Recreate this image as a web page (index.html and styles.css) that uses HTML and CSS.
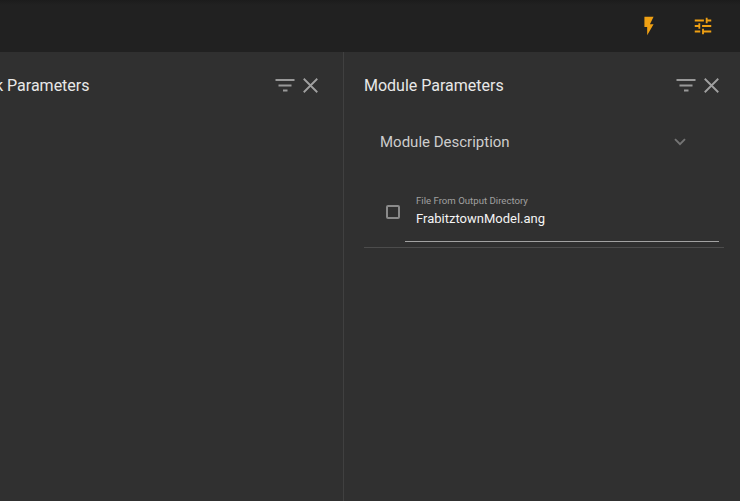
FILE: index.html
```html
<!DOCTYPE html>
<html lang="en">
<head>
<meta charset="utf-8">
<title>Module Parameters</title>
<link rel="stylesheet" href="styles.css">
</head>
<body>
<header class="toolbar">
  <svg class="tool" viewBox="0 0 24 24"><path d="M7 2v11h3v9l7-12h-4l4-8z"/></svg>
  <svg class="tool" viewBox="0 0 24 24"><path d="M3 17v2h6v-2H3zM3 5v2h10V5H3zm10 16v-2h8v-2h-8v-2h-2v6h2zM7 9v2H3v2h4v2h2V9H7zm14 4v-2H11v2h10zm-6-4h2V7h4V5h-4V3h-2v6z"/></svg>
</header>
<main class="panels">
  <section class="panel panel-left">
    <div class="panel-head">
      <h2 class="clipped">k Parameters</h2>
      <svg class="filter" viewBox="0 0 20 14"><path d="M.5 1h19v2H.5zM3.500 6.500h13v2h-13zM8 11.500h4.500v2H8z"/></svg>
      <svg class="close" viewBox="0 0 14 14"><path d="M.7.7l12.600 12.600M13.300.7L.7 13.300"/></svg>
    </div>
  </section>
  <section class="panel panel-right">
    <div class="panel-head">
      <h2>Module Parameters</h2>
      <svg class="filter" viewBox="0 0 20 14"><path d="M.5 1h19v2H.5zM3.500 6.500h13v2h-13zM8 11.500h4.500v2H8z"/></svg>
      <svg class="close" viewBox="0 0 14 14"><path d="M.7.7l12.600 12.600M13.300.7L.7 13.300"/></svg>
    </div>
    <div class="description">
      <h3>Module Description</h3>
      <svg class="chevron" viewBox="0 0 12 8"><path d="M1 1.200l5 5 5-5"/></svg>
    </div>
    <div class="param">
      <span class="checkbox"></span>
      <div class="field">
        <div class="label">File From Output Directory</div>
        <div class="value">FrabitztownModel.ang</div>
      </div>
    </div>
  </section>
</main>
</body>
</html>
```
FILE: styles.css
```css
* { box-sizing: border-box; }
body {
  margin: 0;
  height: 501px;
  overflow: hidden;
  display: flex;
  flex-direction: column;
  background: #303030;
  color: #e8e8e8;
  font-family: Roboto, sans-serif;
}
h2, h3 { margin: 0; font-weight: 400; white-space: nowrap; }
svg { display: block; flex: none; }
.toolbar {
  height: 52px;
  flex: none;
  display: flex;
  align-items: center;
  justify-content: flex-end;
  gap: 32px;
  padding: 0 26px 0 0;
  background: linear-gradient(#1c1c1c, #212121 5px);
}
.tool { width: 22px; height: 22px; fill: #efa013; }
.panels { flex: 1; display: grid; grid-template-columns: 344px 1fr; }
.panel-left { border-right: 1px solid #404040; padding-right: 25px; overflow: hidden; }
.panel-right { padding: 0 16px 0 20px; }
.panel-head { height: 68px; display: flex; align-items: center; }
.panel-right .panel-head { padding-right: 5px; }
h2 { flex: 1; font-size: 16px; line-height: 20px; }
.clipped { margin-left: -5px; }
.filter { width: 20px; height: 14px; fill: #999; margin: 0 8px 2px 0; }
.close { width: 14px; height: 14px; margin-bottom: 1px; fill: none; stroke: #a0a0a0; stroke-width: 1.700; }
.panel-head .close { width: 15px; height: 15px; margin-bottom: 2px; }
.description {
  height: 44px;
  display: flex;
  align-items: center;
  justify-content: space-between;
  padding: 0 38px 0 16px;
}
h3 { font-size: 15px; color: #cdcdcd; }
.chevron { width: 12px; height: 8px; fill: none; stroke: #747474; stroke-width: 1.900; }
.param {
  height: 84px;
  display: flex;
  align-items: flex-end;
  padding: 0 5px 5px 22px;
  border-bottom: 1px solid #4c4c4c;
}
.checkbox {
  width: 14px;
  height: 14px;
  margin: 0 5px 23px 0;
  border: 2px solid #8a8a8a;
  border-radius: 2px;
}
.field { flex: 1; height: 48px; padding-left: 11px; border-bottom: 1px solid #a2a2a2; }
.label { font-size: 9.650px; line-height: 13px; color: #a0a0a0; }
.value { margin-top: 3px; font-size: 13px; line-height: 18px; color: #f4f4f4; }
```
